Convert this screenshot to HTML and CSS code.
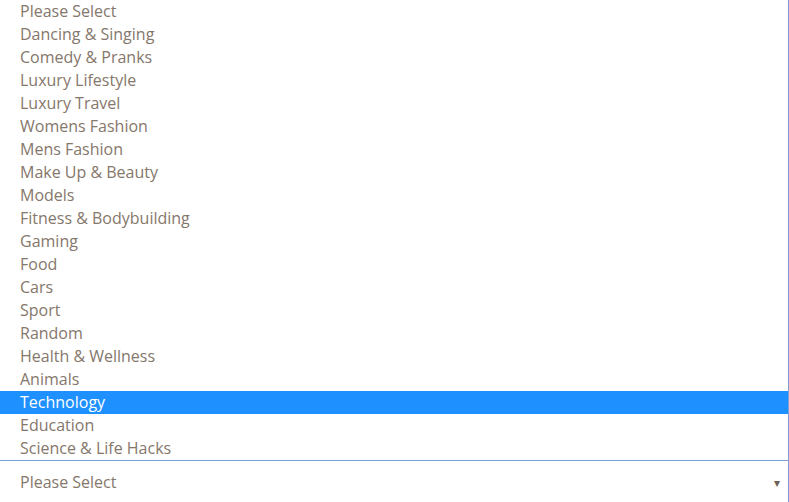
FILE: index.html
```html
<!DOCTYPE html>
<html lang="en">
<head>
    <meta charset="UTF-8">
    <meta name="viewport" content="width=device-width, initial-scale=1.0">
    <title>Category Select</title>
    <link rel="stylesheet" href="styles.css">
</head>
<body>
    <div class="dropdown">
        <ul class="options">
            <li class="option">Please Select</li>
            <li class="option">Dancing &amp; Singing</li>
            <li class="option">Comedy &amp; Pranks</li>
            <li class="option">Luxury Lifestyle</li>
            <li class="option">Luxury Travel</li>
            <li class="option">Womens Fashion</li>
            <li class="option">Mens Fashion</li>
            <li class="option">Make Up &amp; Beauty</li>
            <li class="option">Models</li>
            <li class="option">Fitness &amp; Bodybuilding</li>
            <li class="option">Gaming</li>
            <li class="option">Food</li>
            <li class="option">Cars</li>
            <li class="option">Sport</li>
            <li class="option">Random</li>
            <li class="option">Health &amp; Wellness</li>
            <li class="option">Animals</li>
            <li class="option selected">Technology</li>
            <li class="option">Education</li>
            <li class="option">Science &amp; Life Hacks</li>
        </ul>
        <div class="select">
            <span class="value">Please Select</span>
            <span class="arrow">&#9662;</span>
        </div>
    </div>
</body>
</html>
```

FILE: styles.css
```css
body {
    margin: 0;
    font-family: "Open Sans", "DejaVu Sans", sans-serif;
    background-color: #ffffff;
    overflow: hidden;
}

.dropdown {
    width: 789px;
    height: 502px;
    box-sizing: border-box;
}

.options {
    list-style: none;
    margin: 0;
    padding: 0;
    border-right: 1px solid #7d9fd8;
    border-bottom: 1px solid #7d9fd8;
}

.option {
    height: 23px;
    line-height: 23px;
    padding-left: 20px;
    font-size: 16px;
    color: #85776b;
    white-space: nowrap;
}

.option.selected {
    background-color: #1e90ff;
    color: #ffffff;
}

.select {
    display: flex;
    align-items: center;
    justify-content: space-between;
    height: 41px;
    padding: 0 8px 0 20px;
    border-right: 1px solid #7d9fd8;
    font-size: 16px;
    color: #85776b;
}

.arrow {
    font-size: 12px;
    color: #6e6055;
    padding-top: 1px;
}
```
